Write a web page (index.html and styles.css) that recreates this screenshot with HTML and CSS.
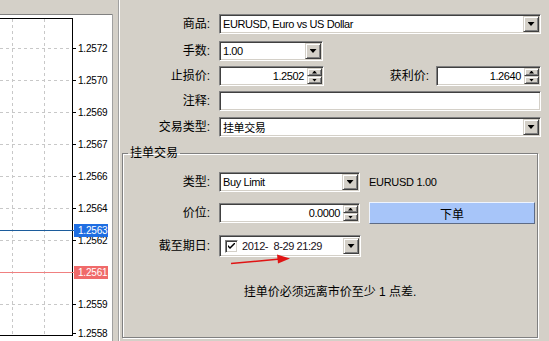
FILE: index.html
```html
<!DOCTYPE html>
<html lang="zh">
<head>
    <meta charset="UTF-8">
    <title>新订单</title>
    <link rel="stylesheet" href="styles.css">
</head>
<body>
<div class="window">

    <!-- 图表部分 -->
    <div class="chart">
        <svg width="113" height="341" viewBox="0 0 113 341">
            <rect x="0" y="14" width="113" height="327" fill="#fff"/>
            <line x1="0" y1="14.5" x2="113" y2="14.5" stroke="#808080"/>
            <line x1="112.5" y1="14" x2="112.5" y2="341" stroke="#a0a0a0"/>
            <g stroke="#c8c8c8" stroke-dasharray="3 3">
                <line x1="12.5" y1="19" x2="12.5" y2="335"/>
                <line x1="44.5" y1="19" x2="44.5" y2="335"/>
                <line x1="0" y1="48.5" x2="72" y2="48.5"/>
                <line x1="0" y1="80.5" x2="72" y2="80.5"/>
                <line x1="0" y1="112.5" x2="72" y2="112.5"/>
                <line x1="0" y1="144.5" x2="72" y2="144.5"/>
                <line x1="0" y1="176.5" x2="72" y2="176.5"/>
                <line x1="0" y1="208.5" x2="72" y2="208.5"/>
                <line x1="0" y1="240.5" x2="72" y2="240.5"/>
                <line x1="0" y1="304.5" x2="72" y2="304.5"/>
            </g>
            <g stroke="#000">
                <line x1="0" y1="18.5" x2="73" y2="18.5"/>
                <line x1="72.5" y1="18" x2="72.5" y2="336"/>
                <line x1="0" y1="335.5" x2="73" y2="335.5"/>
                <line x1="72" y1="48.5" x2="76" y2="48.5"/>
                <line x1="72" y1="80.5" x2="76" y2="80.5"/>
                <line x1="72" y1="112.5" x2="76" y2="112.5"/>
                <line x1="72" y1="144.5" x2="76" y2="144.5"/>
                <line x1="72" y1="176.5" x2="76" y2="176.5"/>
                <line x1="72" y1="208.5" x2="76" y2="208.5"/>
                <line x1="72" y1="240.5" x2="76" y2="240.5"/>
                <line x1="72" y1="304.5" x2="76" y2="304.5"/>
                <line x1="72" y1="333.5" x2="76" y2="333.5"/>
            </g>
            <g class="axis">
                <text x="78" y="52">1.2572</text>
                <text x="78" y="84">1.2570</text>
                <text x="78" y="116">1.2569</text>
                <text x="78" y="148">1.2567</text>
                <text x="78" y="180">1.2566</text>
                <text x="78" y="212">1.2564</text>
                <text x="78" y="244">1.2562</text>
                <text x="78" y="308">1.2559</text>
                <text x="78" y="337">1.2558</text>
            </g>
            <line x1="0" y1="230.5" x2="74" y2="230.5" stroke="#1c5c9c"/>
            <rect x="74" y="224" width="34" height="13" fill="#1f6ee2"/>
            <text class="axis-hl" x="78" y="234">1.2563</text>
            <line x1="0" y1="272.5" x2="74" y2="272.5" stroke="#f08080"/>
            <rect x="74" y="266" width="34" height="13" fill="#f06a6a"/>
            <text class="axis-hl" x="78" y="276">1.2561</text>
        </svg>
    </div>

    <!-- 订单面板 -->
    <div class="panel">
        <div class="row">
            <span class="lbl">商品:</span>
            <div class="box grow">EURUSD, Euro vs US Dollar<span class="drop"></span></div>
        </div>
        <div class="row r2">
            <span class="lbl">手数:</span>
            <div class="box w-lots">1.00<span class="drop"></span></div>
        </div>
        <div class="row r3">
            <span class="lbl">止损价:</span>
            <div class="box w-spin"><span class="val">1.2502</span><span class="spin"><i class="up"></i><i class="down"></i></span></div>
            <span class="lbl-right">获利价:</span>
            <div class="box w-spin"><span class="val">1.2640</span><span class="spin"><i class="up"></i><i class="down"></i></span></div>
        </div>
        <div class="row r4">
            <span class="lbl">注释:</span>
            <div class="box grow"></div>
        </div>
        <div class="row r5">
            <span class="lbl">交易类型:</span>
            <div class="box grow">挂单交易<span class="drop"></span></div>
        </div>

        <fieldset class="group">
            <legend>挂单交易</legend>
            <div class="row g1">
                <span class="lbl lbl-g">类型:</span>
                <div class="box w-g">Buy Limit<span class="drop"></span></div>
                <span class="info">EURUSD 1.00</span>
            </div>
            <div class="row g2">
                <span class="lbl lbl-g">价位:</span>
                <div class="box w-g"><span class="val">0.0000</span><span class="spin"><i class="up"></i><i class="down"></i></span></div>
                <div class="btn">下单</div>
            </div>
            <div class="row g3">
                <span class="lbl lbl-g">截至期日:</span>
                <div class="box w-date">
                    <span class="check">
                        <svg width="7" height="7" viewBox="0 0 7 7"><path d="M0 2 L2 4 L7 -1 L7 1 L2 6 L0 4 Z" fill="#000"/></svg>
                    </span>
                    <span class="date">2012-  8-29 21:29</span>
                    <span class="drop"></span>
                </div>
            </div>
            <p class="msg">挂单价必须远离市价至少 1 点差.</p>
        </fieldset>
    </div>
</div>

<!-- 红色箭头 -->
<svg class="arrow" width="549" height="341" viewBox="0 0 549 341">
    <line x1="231" y1="263.5" x2="280" y2="259" stroke="#e01414" stroke-width="1.5"/>
    <polygon points="277,254.5 290,258.5 278,263.5" fill="#e01414"/>
</svg>
</body>
</html>
```

FILE: styles.css
```css
/* Estilos generales */
body {
    margin: 0;
    background-color: #d4d0c8;
    font-family: "Liberation Sans", "Noto Sans CJK SC", sans-serif;
    font-size: 11px;
    color: #000;
}

.window {
    display: flex;
    height: 341px;
    overflow: hidden;
}

/* Gráfico */
.chart {
    width: 113px;
    flex: none;
}

.chart svg {
    display: block;
}

.axis text,
.axis-hl {
    font-family: "Liberation Sans", sans-serif;
    font-size: 10px;
    letter-spacing: -0.2px;
}

.axis-hl {
    fill: #fff;
}

/* Panel del formulario */
.panel {
    flex: 1;
    margin-left: 6px;
    border-left: 1px solid #fff;
    box-shadow: -1px 0 #a0a0a0;
    padding: 14px 8px 0 0;
}

.row {
    display: flex;
    align-items: center;
}

.r2 { margin-top: 7px; }
.r3 { margin-top: 5px; }
.r4 { margin-top: 5px; }
.r5 { margin-top: 6px; }

.lbl {
    width: 90px;
    flex: none;
    margin-right: 9px;
    text-align: right;
    font-size: 12px;
    line-height: 16px;
}

.lbl-g {
    width: 87px;
}

.lbl-right {
    margin-left: auto;
    margin-right: 7px;
    font-size: 12px;
    line-height: 16px;
}

/* Campos hundidos */
.box {
    height: 20px;
    box-sizing: border-box;
    display: flex;
    align-items: center;
    padding-left: 3px;
    background-color: #fff;
    border: 1px solid;
    border-color: #808080 #fff #fff #808080;
    box-shadow: inset 1px 1px #404040, inset -1px -1px #d4d0c8;
    font-size: 11px;
    letter-spacing: -0.4px;
    white-space: nowrap;
}

.grow { flex: 1; }
.w-lots { width: 104px; }
.w-spin { width: 105px; }
.w-g { width: 141px; }
.w-date { width: 142px; height: 22px; padding-left: 5px; }

.val {
    flex: 1;
    text-align: right;
}

/* Botón desplegable */
.drop {
    margin-left: auto;
    margin-right: 1px;
    width: 16px;
    height: 16px;
    flex: none;
    box-sizing: border-box;
    display: flex;
    align-items: center;
    justify-content: center;
    background-color: #d4d0c8;
    border: 1px solid;
    border-color: #d4d0c8 #404040 #404040 #d4d0c8;
    box-shadow: inset 1px 1px #fff, inset -1px -1px #808080;
}

.drop::after {
    content: "";
    width: 7px;
    height: 4px;
    background-color: #000;
    clip-path: polygon(0 0, 100% 0, 50% 100%);
}

/* Flechas arriba/abajo */
.spin {
    display: flex;
    flex-direction: column;
    margin-left: 3px;
    margin-right: 1px;
}

.spin i {
    width: 15px;
    height: 8px;
    box-sizing: border-box;
    display: flex;
    align-items: center;
    justify-content: center;
    background-color: #d4d0c8;
    border: 1px solid;
    border-color: #d4d0c8 #404040 #404040 #d4d0c8;
    box-shadow: inset 1px 1px #fff, inset -1px -1px #808080;
}

.spin i::after {
    content: "";
    width: 5px;
    height: 3px;
    background-color: #000;
}

.spin .up::after {
    clip-path: polygon(50% 0, 100% 100%, 0 100%);
}

.spin .down::after {
    clip-path: polygon(0 0, 100% 0, 50% 100%);
}

/* Grupo de orden pendiente */
.group {
    margin: 8px 3px 0 2px;
    padding: 0;
    height: 193px;
    box-sizing: border-box;
    border: 1px solid #808080;
    box-shadow: inset 1px 1px #fff, 1px 1px #fff;
}

.group legend {
    margin-left: 5px;
    padding: 0 2px;
    font-size: 12px;
    line-height: 16px;
}

.g1 { margin-top: 11px; }
.g2 { margin-top: 10px; height: 22px; }
.g3 { margin-top: 11px; }

.info {
    margin-left: 9px;
    font-size: 11px;
    letter-spacing: -0.3px;
}

.btn {
    margin-left: 9px;
    width: 166px;
    height: 22px;
    box-sizing: border-box;
    display: flex;
    align-items: center;
    justify-content: center;
    background-color: #a7c5f9;
    border: 1px solid;
    border-color: #eef4ff #5d6b86 #5d6b86 #eef4ff;
    font-size: 12px;
}

.check {
    width: 13px;
    height: 13px;
    flex: none;
    box-sizing: border-box;
    display: flex;
    align-items: center;
    justify-content: center;
    background-color: #fff;
    border: 1px solid;
    border-color: #808080 #fff #fff #808080;
    box-shadow: inset 1px 1px #404040, inset -1px -1px #d4d0c8;
}

.check svg {
    display: block;
}

.date {
    margin-left: 4px;
    white-space: pre;
    color: #201020;
}

.msg {
    margin: 27px 0 0;
    text-align: center;
    font-size: 12px;
    line-height: 16px;
}

/* Flecha roja encima */
.arrow {
    position: absolute;
    left: 0;
    top: 0;
    pointer-events: none;
}
```
